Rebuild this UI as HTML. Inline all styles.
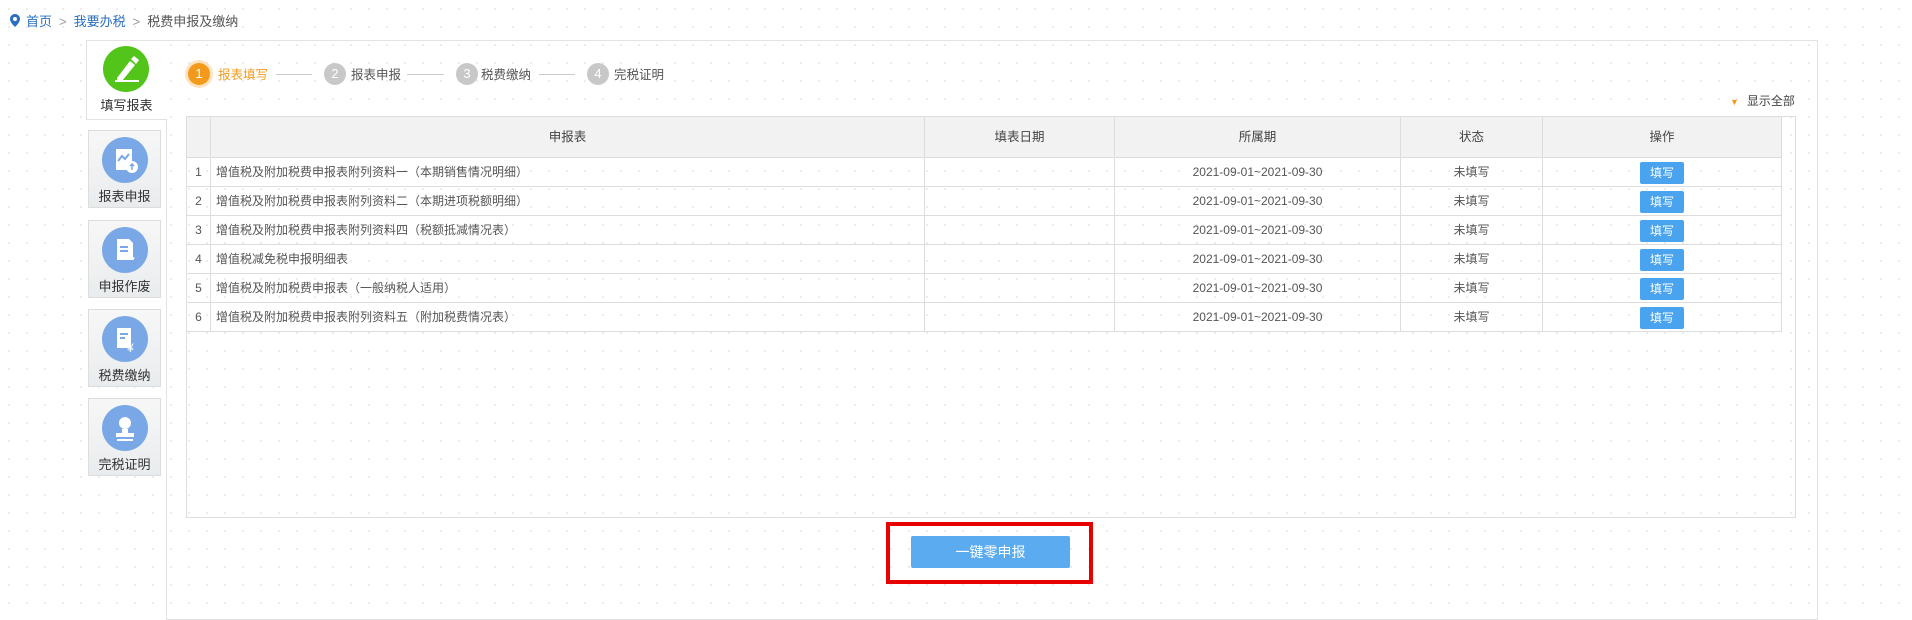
<!DOCTYPE html>
<html><head><meta charset="utf-8"><style>
*{margin:0;padding:0;box-sizing:border-box}
body{width:1912px;height:608px;overflow:hidden;background:#fff;background-image:radial-gradient(#e6e6e6 0.8px,transparent 0.9px);background-size:18px 18px;font-family:"Liberation Sans","Noto Sans CJK SC",sans-serif;font-size:13px;color:#555;position:relative}
.a{position:absolute}
.bc{left:10px;top:11px;font-size:13px;color:#555;white-space:nowrap}
.bc a{color:#2a6fc0;text-decoration:none}
.bc .sep{color:#999;margin:0 7px}
.panel{left:166px;top:40px;width:1652px;height:580px;border:1px solid #e3e3e3}
.side{left:86px;top:40px;width:81px;height:80px;background:#fff;border:1px solid #e3e3e3;border-right:none}
.it{width:73px;height:78px;border:1px solid #ddd;background:linear-gradient(#f7f7f7,#e9ecee);text-align:center}
.circ{position:absolute;width:46px;height:46px;border-radius:50%;left:13px;top:6px;background:#7aa8e6}
.lbl{position:absolute;left:0;width:100%;top:55px;font-size:13px;color:#333;text-align:center}
.step{top:62px;height:26px;line-height:26px;font-size:12.5px;color:#555}
.sc{position:absolute;width:22px;height:22px;border-radius:50%;background:#c8c8c8;color:#fff;text-align:center;line-height:22px;font-size:13px}
.ln{top:74px;height:1px;background:#ccc}
table{border-collapse:collapse;table-layout:fixed}
td,th{border:1px solid #ddd;height:29px;line-height:28px;padding:0;font-weight:normal;color:#555;font-size:12px;vertical-align:middle;white-space:nowrap;overflow:hidden}
th{height:41px;background:#f2f2f2;color:#444;font-size:12.5px}
.c{text-align:center}
.btn{display:inline-block;width:44px;height:22px;line-height:22px;background:#4aa3ee;color:#fff;border-radius:2px;font-size:12px;vertical-align:middle}
</style></head><body>
<div class="a bc"><svg width="10" height="13" viewBox="0 0 10 13" style="vertical-align:-1px;margin-right:6px"><path d="M5 0C2.2 0 0 2.2 0 5c0 3.5 5 8 5 8s5-4.5 5-8C10 2.2 7.8 0 5 0z" fill="#2a6fc0"/><circle cx="5" cy="5" r="2" fill="#fff"/></svg><a>首页</a><span class="sep">&gt;</span><a>我要办税</a><span class="sep">&gt;</span>税费申报及缴纳</div>
<div class="a panel"></div>
<div class="a side"></div>
<div class="a" style="left:87px;top:41px;width:79px;height:78px;text-align:center">
 <div class="circ" style="background:#52c41a;left:16px;top:5px"><svg width="46" height="46" viewBox="0 0 46 46"><path d="M14 32 L27 15 L32 19 L19 35 L14 35Z" fill="#fff"/><path d="M28 13 L31 10 L36 14 L33 18Z" fill="#fff"/><rect x="12" y="34" width="24" height="2" fill="#fff"/></svg></div>
 <div class="lbl" style="top:54px">填写报表</div></div>
<div class="a it" style="left:88px;top:130px"><div class="circ"><svg width="46" height="46" viewBox="0 0 46 46"><rect x="14" y="12" width="16" height="21" fill="#fff"/><path d="M16 24l4-5 3 3 4-5" stroke="#7aa8e6" stroke-width="2" fill="none"/><circle cx="30" cy="30" r="6" fill="#fff"/><path d="M30 33v-6m-2 2l2-2 2 2" stroke="#7aa8e6" stroke-width="1.5" fill="none"/></svg></div><div class="lbl">报表申报</div></div>
<div class="a it" style="left:88px;top:220px"><div class="circ"><svg width="46" height="46" viewBox="0 0 46 46"><path d="M15 12h12l4 4v17H15z" fill="#fff"/><path d="M18 20h8M18 24h8" stroke="#7aa8e6" stroke-width="2"/><path d="M24 28l8 4" stroke="#fff" stroke-width="3"/></svg></div><div class="lbl">申报作废</div></div>
<div class="a it" style="left:88px;top:309px"><div class="circ"><svg width="46" height="46" viewBox="0 0 46 46"><rect x="15" y="12" width="14" height="20" fill="#fff"/><path d="M18 18h8M18 22h5" stroke="#7aa8e6" stroke-width="2"/><text x="25" y="36" font-size="12" fill="#fff" font-family="Liberation Sans">¥</text></svg></div><div class="lbl">税费缴纳</div></div>
<div class="a it" style="left:88px;top:398px"><div class="circ"><svg width="46" height="46" viewBox="0 0 46 46"><circle cx="23" cy="18" r="6" fill="#fff"/><path d="M20 24h6v4h6v4H14v-4h6z" fill="#fff"/><rect x="15" y="34" width="16" height="2" fill="#fff"/></svg></div><div class="lbl">完税证明</div></div>

<div class="a sc" style="left:188px;top:63px;background:#f39a1c;box-shadow:0 0 0 3px #fde3c0">1</div>
<div class="a step" style="left:218px;color:#f39a1c">报表填写</div>
<div class="a ln" style="left:276px;width:36px"></div>
<div class="a sc" style="left:324px;top:63px">2</div>
<div class="a step" style="left:351px">报表申报</div>
<div class="a ln" style="left:407px;width:37px"></div>
<div class="a sc" style="left:456px;top:63px">3</div>
<div class="a step" style="left:481px">税费缴纳</div>
<div class="a ln" style="left:539px;width:36px"></div>
<div class="a sc" style="left:587px;top:63px">4</div>
<div class="a step" style="left:614px">完税证明</div>
<div class="a" style="left:1730px;top:92px;font-size:12px;color:#444"><span style="color:#f39a1c;font-size:9px;margin-right:8px">▼</span>显示全部</div>

<div class="a" style="left:186px;top:116px;width:1610px;height:402px;border:1px solid #ddd"></div>
<table class="a" style="left:186px;top:116px;width:1595px">
<colgroup><col style="width:24px"><col style="width:714px"><col style="width:190px"><col style="width:286px"><col style="width:142px"><col style="width:239px"></colgroup>
<tr><th></th><th>申报表</th><th>填表日期</th><th>所属期</th><th>状态</th><th>操作</th></tr>
<tr><td class="c">1</td><td style="padding-left:5px">增值税及附加税费申报表附列资料一（本期销售情况明细）</td><td></td><td class="c">2021-09-01~2021-09-30</td><td class="c">未填写</td><td class="c"><span class="btn">填写</span></td></tr>
<tr><td class="c">2</td><td style="padding-left:5px">增值税及附加税费申报表附列资料二（本期进项税额明细）</td><td></td><td class="c">2021-09-01~2021-09-30</td><td class="c">未填写</td><td class="c"><span class="btn">填写</span></td></tr>
<tr><td class="c">3</td><td style="padding-left:5px">增值税及附加税费申报表附列资料四（税额抵减情况表）</td><td></td><td class="c">2021-09-01~2021-09-30</td><td class="c">未填写</td><td class="c"><span class="btn">填写</span></td></tr>
<tr><td class="c">4</td><td style="padding-left:5px">增值税减免税申报明细表</td><td></td><td class="c">2021-09-01~2021-09-30</td><td class="c">未填写</td><td class="c"><span class="btn">填写</span></td></tr>
<tr><td class="c">5</td><td style="padding-left:5px">增值税及附加税费申报表（一般纳税人适用）</td><td></td><td class="c">2021-09-01~2021-09-30</td><td class="c">未填写</td><td class="c"><span class="btn">填写</span></td></tr>
<tr><td class="c">6</td><td style="padding-left:5px">增值税及附加税费申报表附列资料五（附加税费情况表）</td><td></td><td class="c">2021-09-01~2021-09-30</td><td class="c">未填写</td><td class="c"><span class="btn">填写</span></td></tr>
</table>

<div class="a" style="left:886px;top:522px;width:207px;height:62px;border:4px solid #e60000"></div>
<div class="a" style="left:911px;top:536px;width:159px;height:32px;line-height:32px;background:#5aabf0;color:#fff;text-align:center;font-size:14px;border-radius:2px">一键零申报</div>
</body></html>
